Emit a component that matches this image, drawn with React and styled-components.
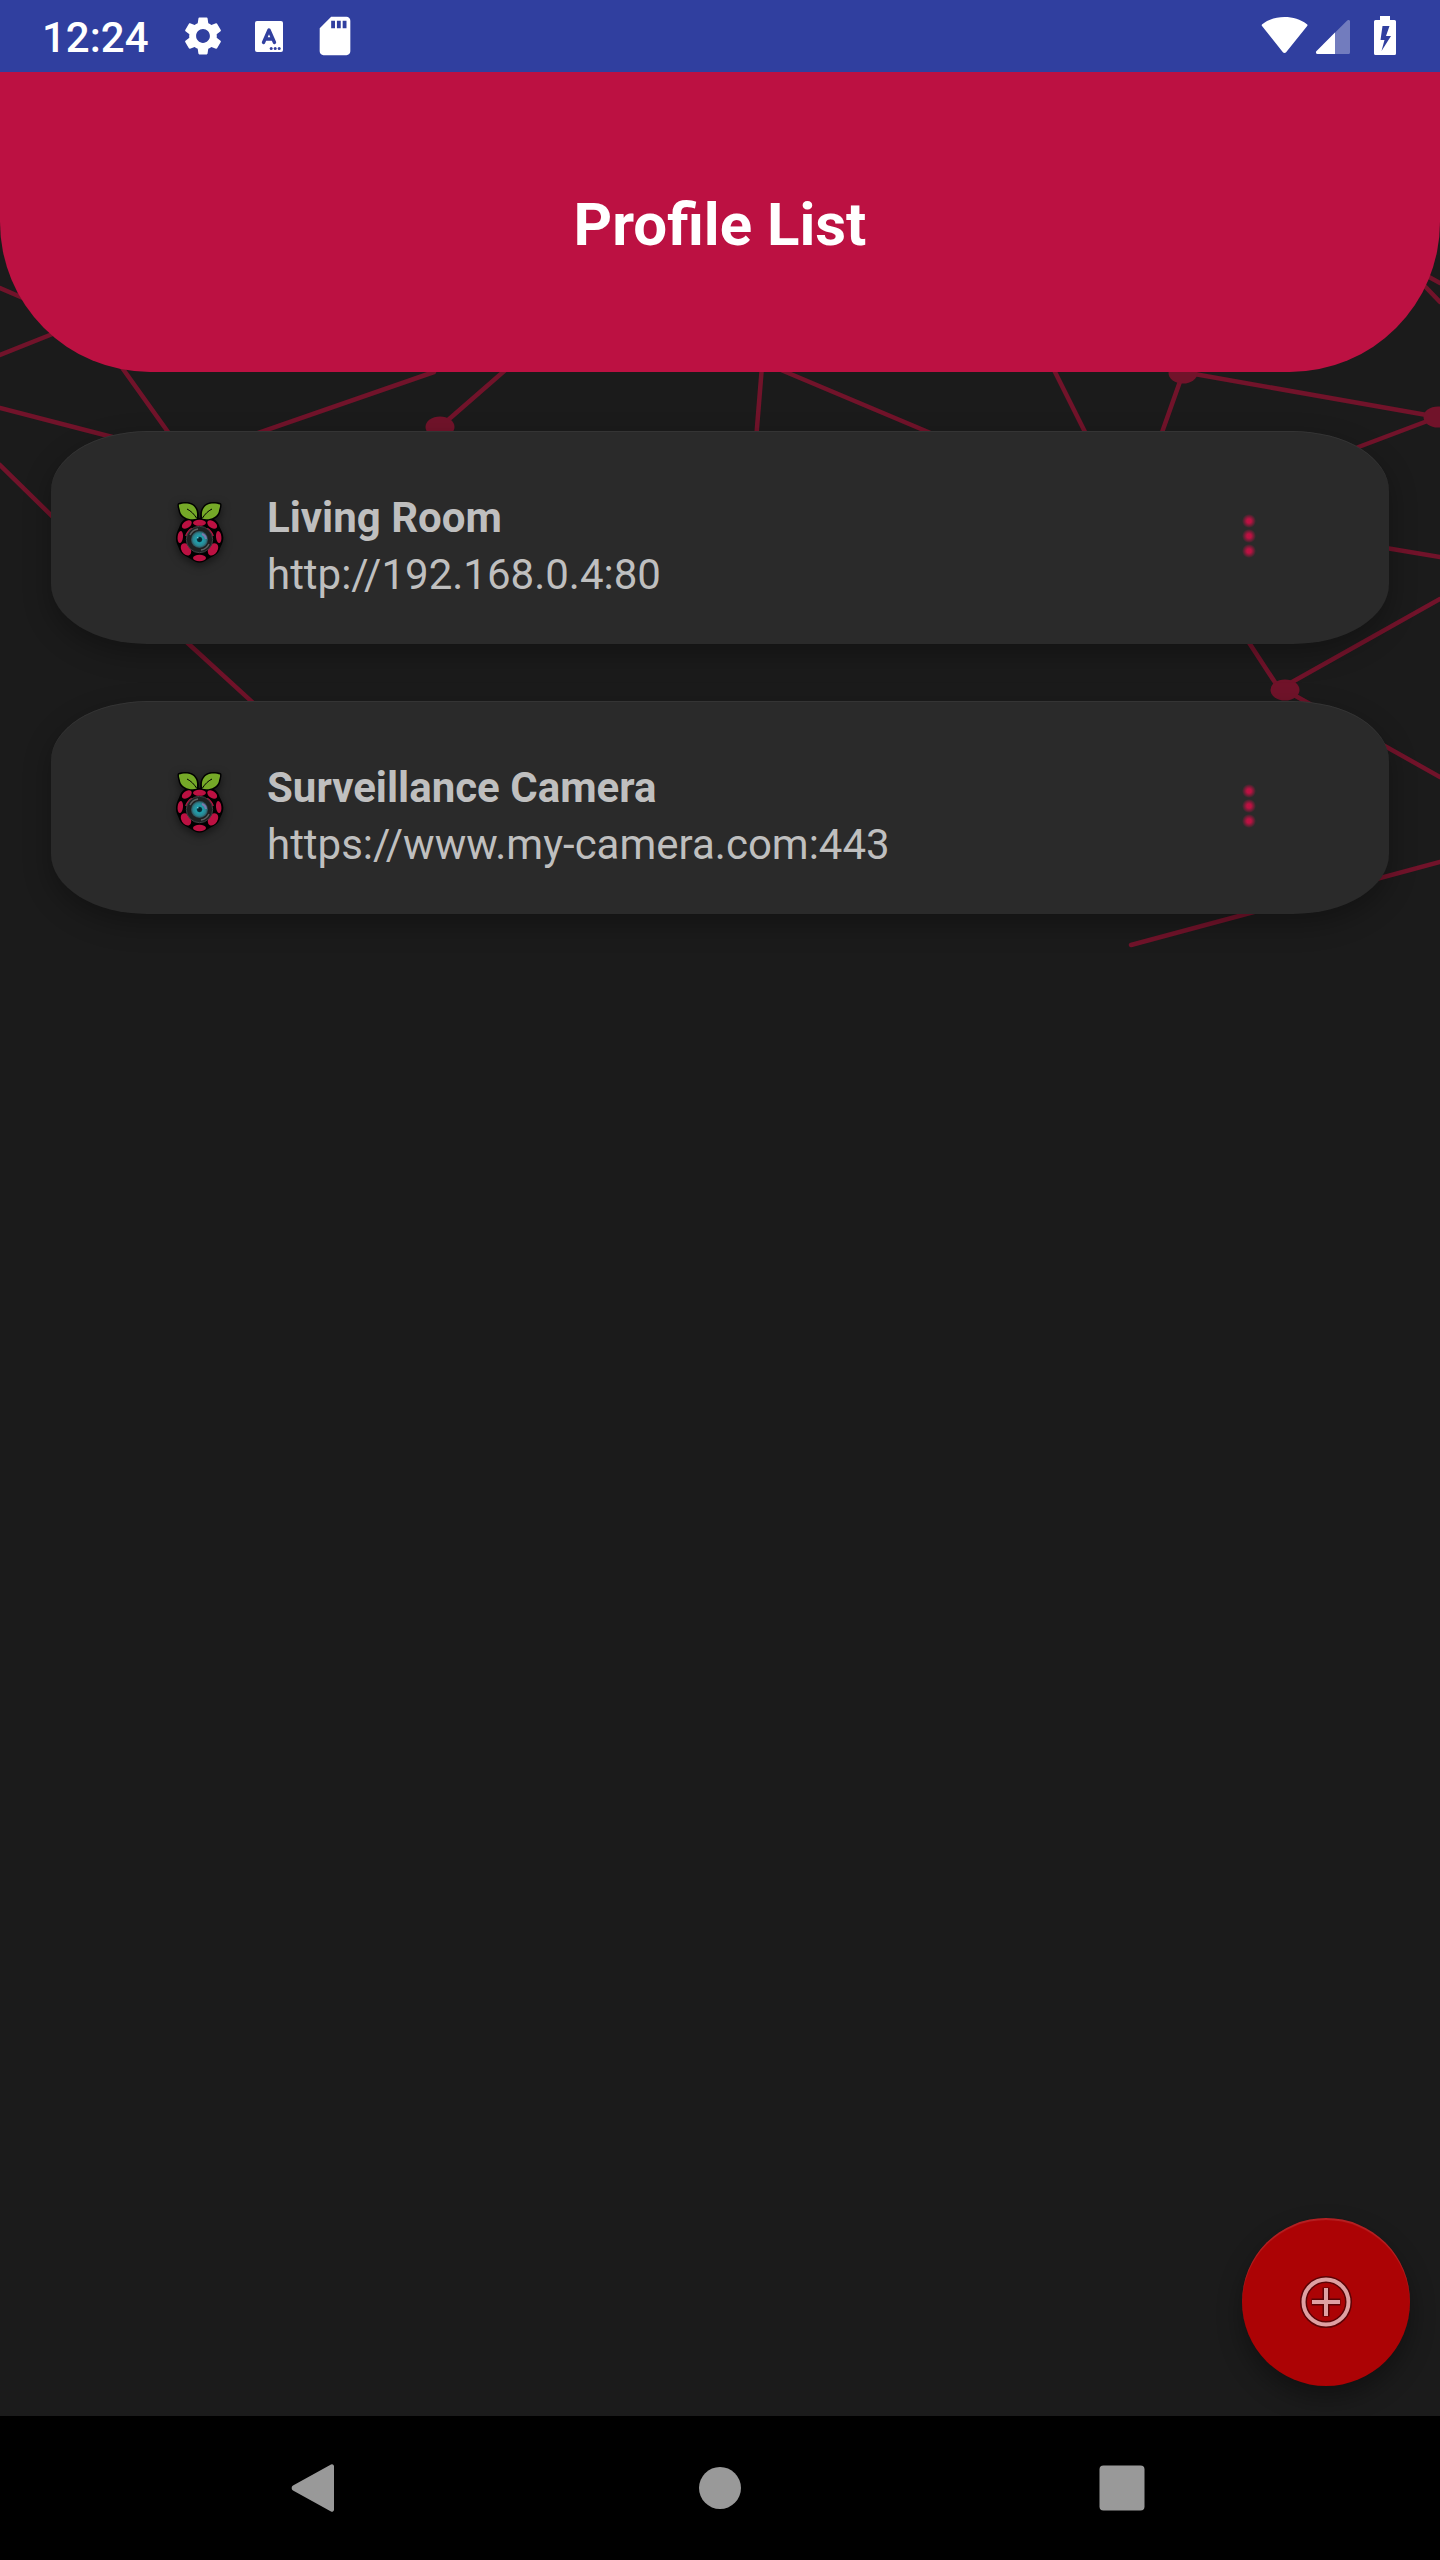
import React from "react";
import styled, { createGlobalStyle } from "styled-components";
import { MdSettings, MdSdCard } from "react-icons/md";

const profiles = [
  { name: "Living Room", url: "http://192.168.0.4:80" },
  { name: "Surveillance Camera", url: "https://www.my-camera.com:443" },
];

const links = [
  [0, 288, 30, 301],
  [0, 355, 60, 331],
  [118, 362, 178, 446],
  [0, 408, 120, 439],
  [434, 372, 252, 435],
  [510, 366, 440, 427],
  [0, 465, 60, 524],
  [762, 366, 756, 440],
  [774, 367, 940, 437],
  [1052, 366, 1090, 442],
  [1183, 373, 1160, 438],
  [1183, 372, 1438, 417],
  [1438, 417, 1340, 454],
  [1420, 272, 1440, 283],
  [1415, 276, 1440, 302],
  [1380, 547, 1440, 557],
  [1440, 599, 1285, 686],
  [1246, 638, 1280, 690],
  [1285, 690, 1440, 777],
  [1440, 862, 1131, 945],
  [180, 636, 262, 711],
];

const nodes = [
  [440, 427],
  [1183, 373],
  [1438, 417],
  [1285, 690],
];

function Network() {
  return (
    <StyledNetwork viewBox="0 0 1440 960" aria-hidden="true">
      {links.map(([x1, y1, x2, y2]) => (
        <line key={`${x1}-${y1}-${x2}`} x1={x1} y1={y1} x2={x2} y2={y2} />
      ))}
      {nodes.map(([cx, cy]) => (
        <ellipse key={cx} cx={cx} cy={cy} rx="14.5" ry="10.5" />
      ))}
    </StyledNetwork>
  );
}

function StatusIcons() {
  return (
    <svg width="136" height="72" viewBox="0 0 136 72" aria-hidden="true">
      <path
        d="M24.5 53 a2 2 0 0 1 -1.6 -.8 L2.2 26.3 a1.6 1.6 0 0 1 .4 -2.4 C8.5 19.6 16 17 24.5 17 S40.5 19.6 46.6 23.9 a1.6 1.6 0 0 1 .4 2.4 L26.1 52.2 a2 2 0 0 1 -1.6 .8z"
        fill="#fff"
      />
      <path
        d="M57.5 54 a1.6 1.6 0 0 1 -1.1 -2.7 L87.2 20.5 a1.6 1.6 0 0 1 2.8 1.1 V52.4 a1.6 1.6 0 0 1 -1.6 1.6z"
        fill="#fff"
        opacity="0.32"
      />
      <path d="M57.5 54 a1.6 1.6 0 0 1 -1.1 -2.7 L75 32.5 V54z" fill="#fff" />
      <path
        fillRule="evenodd"
        d="M120 16 h10 v4 h4.5 a1.5 1.5 0 0 1 1.5 1.5 V53.5 a1.5 1.5 0 0 1 -1.5 1.5 H115.5 a1.5 1.5 0 0 1 -1.5 -1.5 V21.5 a1.5 1.5 0 0 1 1.5 -1.5 h4.5z M122.5 26 L120.5 40 h4 L121.5 51 L131 36 h-5 L129.5 26z"
        fill="#fff"
      />
    </svg>
  );
}

function KeyboardIcon() {
  return (
    <svg width="28" height="31" viewBox="0 0 28 31" aria-hidden="true">
      <rect width="28" height="31" rx="2" fill="#fff" />
      <path
        d="M8.5 21.5 L14 9 L19.5 21.5 M10.5 18 H17.5"
        fill="none"
        stroke="#303f9f"
        strokeWidth="3.4"
        strokeLinecap="round"
        strokeLinejoin="round"
      />
      <g fill="#303f9f">
        <circle cx="16.2" cy="27.5" r="1.5" />
        <circle cx="20.2" cy="27.5" r="1.5" />
        <circle cx="24.2" cy="27.5" r="1.5" />
      </g>
    </svg>
  );
}

function BerryIcon() {
  return (
    <StyledBerry width="48" height="62" viewBox="0 0 48 62" aria-hidden="true">
      <defs>
        <radialGradient id="iris">
          <stop offset="0" stopColor="#03222b" />
          <stop offset="0.25" stopColor="#06303a" />
          <stop offset="0.38" stopColor="#1fa0ae" />
          <stop offset="0.75" stopColor="#2b8490" />
          <stop offset="1" stopColor="#2d4a52" />
        </radialGradient>
      </defs>
      <path d="M23.5 17 C31 14 40 17 43 24 C44 28 48 32 47.3 38 C47 42 45 44 43.5 49 C41 55 34 56 29 60 C25 62 22 62 18 60 C13 56 6 55 3.5 49 C2 44 0 42 0 38 C-.5 32 3 28 4 24 C7 17 16 14 23.5 17z" />
      <g stroke="#000" strokeWidth="3" strokeLinejoin="round">
        <path d="M21 18 C22.5 10 19 5 15 3.5 C12 1.8 6 2.3 3 3.5 C2.5 6 4 8 4.3 11 C6 16.500 14 19.500 21 18z" />
        <path d="M26 18 C24.5 10 28 5 32 3.5 C35 1.8 41 2.3 44 3.5 C44.5 6 43 8 42.7 11 C41 16.5 33 19.5 26 18z" />
      </g>
      <g fill="#75a928">
        <path d="M20.5 17.8 C22.5 10 19 5 15 3.5 C12 1.8 6 2.3 3 3.5 C2.5 6 4 8 4.3 11 C6 16.5 14 19.5 20.5 17.8z" />
        <path d="M26.5 17.8 C24.5 10 28 5 32 3.5 C35 1.8 41 2.3 44 3.5 C44.5 6 43 8 42.7 11 C41 16.5 33 19.5 26.5 17.8z" />
      </g>
      <path
        d="M11 8 C15 10 18 13 20.5 17 M36 8 C32 10 29 13 26.5 17"
        fill="none"
        stroke="#000"
        strokeWidth="1"
      />
      <g fill="#bc1142">
        <ellipse cx="23.5" cy="21.8" rx="6.5" ry="3" />
        <ellipse cx="10.8" cy="23.5" rx="5.5" ry="3.5" transform="rotate(-35 10.8 23.5)" />
        <ellipse cx="36.2" cy="23.5" rx="5.5" ry="3.5" transform="rotate(35 36.2 23.5)" />
        <ellipse cx="4.3" cy="36" rx="2.7" ry="6" transform="rotate(6 4.3 36)" />
        <ellipse cx="42.7" cy="36" rx="2.7" ry="6" transform="rotate(-6 42.7 36)" />
        <ellipse cx="10" cy="48.3" rx="4.6" ry="6.6" transform="rotate(-32 10 48.3)" />
        <ellipse cx="37" cy="48.3" rx="4.6" ry="6.6" transform="rotate(32 37 48.3)" />
        <ellipse cx="23.5" cy="57" rx="6.5" ry="3.3" />
      </g>
      <path
        d="M10 35 A14 14 0 0 1 16 27.5 M31 27.5 A14 14 0 0 1 37 35"
        fill="none"
        stroke="#bc1142"
        strokeWidth="2"
      />
      <circle cx="23.5" cy="38.5" r="13.2" fill="#1d1f20" stroke="#3c4041" />
      <path
        d="M14 34 A10.5 10.5 0 0 1 22 28 M33 43 A10.5 10.5 0 0 1 25 49"
        fill="none"
        stroke="#5b6061"
        strokeWidth="1.5"
      />
      <circle cx="23.5" cy="38.5" r="8.5" fill="url(#iris)" />
      <path d="M26 33 A6 6 0 0 1 30 38" fill="none" stroke="#7f78ad" strokeWidth="2" />
      <circle cx="21.8" cy="36.8" r="0.8" fill="#7fd4de" />
    </StyledBerry>
  );
}

function MoreIcon() {
  return (
    <svg width="14" height="44" viewBox="0 0 14 44" aria-hidden="true">
      <defs>
        <radialGradient id="dot">
          <stop offset="0.3" stopColor="#bc1142" />
          <stop offset="1" stopColor="#bc1142" stopOpacity="0" />
        </radialGradient>
      </defs>
      <g fill="url(#dot)">
        <circle cx="7" cy="7" r="7" />
        <circle cx="7" cy="22" r="7" />
        <circle cx="7" cy="37" r="7" />
      </g>
    </svg>
  );
}

function AddIcon() {
  return (
    <svg width="56" height="56" viewBox="0 0 56 56" fill="none" aria-hidden="true">
      <g stroke="#5c0305" strokeWidth="7" strokeLinecap="square">
        <circle cx="28" cy="28" r="22.5" />
        <path d="M28 17 V39 M17 28 H39" />
      </g>
      <g stroke="#dfa0a2" strokeWidth="4">
        <circle cx="28" cy="28" r="22.5" />
        <path d="M28 14 V42 M14 28 H42" />
      </g>
    </svg>
  );
}

function App() {
  return (
    <Screen>
      <GlobalStyle />
      <Network />
      <StatusBar>
        <StatusGroup>
          <Clock>12:24</Clock>
          <MdSettings size={46} />
          <KeyboardIcon />
          <MdSdCard size={46} />
        </StatusGroup>
        <StatusIcons />
      </StatusBar>
      <Header>
        <h1>Profile List</h1>
      </Header>
      <ProfileList>
        {profiles.map((profile) => (
          <ProfileCard key={profile.name}>
            <BerryIcon />
            <ProfileText>
              <ProfileName>{profile.name}</ProfileName>
              <ProfileUrl>{profile.url}</ProfileUrl>
            </ProfileText>
            <MoreButton aria-label={`Options for ${profile.name}`}>
              <MoreIcon />
            </MoreButton>
          </ProfileCard>
        ))}
      </ProfileList>
      <AddButton aria-label="Add profile">
        <AddIcon />
      </AddButton>
      <NavBar>
        <NavButton aria-label="Back">
          <svg width="60" height="60" viewBox="0 0 60 60">
            <path d="M43 6.6 a2 2 0 0 1 3 1.6 V51.8 a2 2 0 0 1 -3 1.6 L5 32.4 a2.8 2.8 0 0 1 0 -4.8z" />
          </svg>
        </NavButton>
        <NavButton aria-label="Home">
          <svg width="60" height="60" viewBox="0 0 60 60">
            <circle cx="30" cy="30" r="21" />
          </svg>
        </NavButton>
        <NavButton aria-label="Recent apps">
          <svg width="60" height="60" viewBox="0 0 60 60">
            <rect x="7.5" y="7.5" width="45" height="45" rx="4" />
          </svg>
        </NavButton>
      </NavBar>
    </Screen>
  );
}

const GlobalStyle = createGlobalStyle`
  * {
    box-sizing: border-box;
  }
  body {
    margin: 0;
    background-color: #1b1b1b;
    font-family: Roboto, "Liberation Sans", sans-serif;
  }
  h1, h2, p, ul {
    margin: 0;
    padding: 0;
  }
  button {
    display: flex;
    align-items: center;
    justify-content: center;
    padding: 0;
    border: none;
    background: none;
    cursor: pointer;
  }
`;

const Screen = styled.div`
  position: relative;
  display: flex;
  flex-direction: column;
  min-height: 100vh;
  isolation: isolate;
`;

const StyledNetwork = styled.svg`
  position: absolute;
  top: 0;
  left: 0;
  width: 100%;
  z-index: -1;
  line {
    stroke: #71132a;
    stroke-width: 4.5;
    stroke-linecap: round;
  }
  ellipse {
    fill: #71132a;
  }
`;

const StatusBar = styled.div`
  display: flex;
  align-items: center;
  justify-content: space-between;
  height: 72px;
  padding: 0 44px 0 42px;
  color: #fff;
  background-color: #303f9f;
`;

const StatusGroup = styled.div`
  display: flex;
  align-items: center;
  gap: 29px;
`;

const Clock = styled.span`
  padding: 2px 2px 0 0;
  font-size: 42px;
  font-weight: 500;
`;

const Header = styled.header`
  display: flex;
  align-items: center;
  justify-content: center;
  height: 300px;
  padding-top: 4px;
  color: #fff;
  background-color: #bc1142;
  border-radius: 0 0 150px 150px;
  h1 {
    font-size: 60px;
    font-weight: 700;
  }
`;

const ProfileList = styled.ul`
  display: flex;
  flex: 1;
  flex-direction: column;
  gap: 57px;
  padding: 59px 51px;
  list-style: none;
`;

const ProfileCard = styled.li`
  display: flex;
  align-items: center;
  gap: 43px;
  height: 213px;
  padding: 0 110px 4px 125px;
  color: #bfbfbf;
  background-color: #2a2a2a;
  border-radius: 96px / 60px;
  box-shadow: 0 10px 28px rgba(0, 0, 0, 0.3),
    inset 0 1px 0 rgba(255, 255, 255, 0.05);
`;

const StyledBerry = styled.svg`
  flex-shrink: 0;
  margin-bottom: 8px;
  filter: drop-shadow(0 3px 4px rgba(0, 0, 0, 0.5));
`;

const ProfileText = styled.div`
  flex: 1;
  padding-top: 20px;
  font-size: 42px;
  line-height: 57px;
`;

const ProfileName = styled.h2`
  font-size: inherit;
  font-weight: 700;
`;

const ProfileUrl = styled.p`
  overflow-wrap: anywhere;
`;

const MoreButton = styled.button`
  width: 60px;
  height: 90px;
`;

const AddButton = styled.button`
  position: absolute;
  right: 30px;
  bottom: 174px;
  width: 168px;
  height: 168px;
  border-radius: 50%;
  background-color: #ac0305;
  box-shadow: 0 12px 24px rgba(0, 0, 0, 0.35),
    inset 0 2px 1px rgba(255, 255, 255, 0.12);
`;

const NavBar = styled.nav`
  display: flex;
  align-items: center;
  justify-content: center;
  gap: 258px;
  height: 144px;
  background-color: #000;
`;

const NavButton = styled.button`
  width: 144px;
  height: 144px;
  svg {
    fill: #999;
  }
`;

export default App;
